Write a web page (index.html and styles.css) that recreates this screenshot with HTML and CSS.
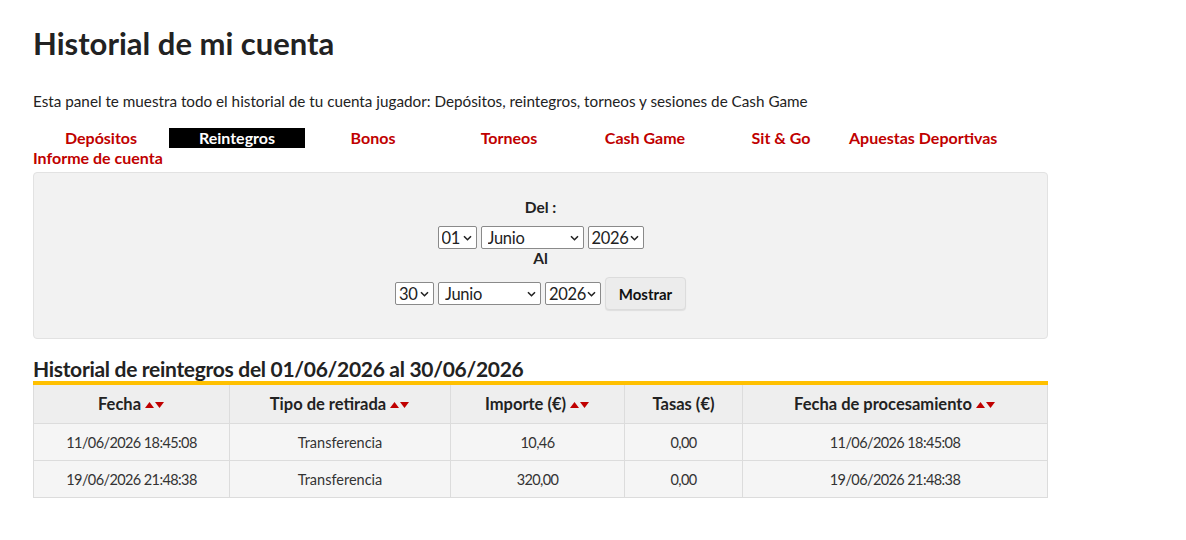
FILE: index.html
```html
<!DOCTYPE html>
<html lang="es">

<head>
    <meta charset="UTF-8">
    <meta name="viewport" content="width=device-width, initial-scale=1.0">
    <title>Historial de mi cuenta</title>
    <link rel="stylesheet" href="styles.css">
</head>

<body>
    <div class="page">
        <h1 class="page-title">Historial de mi cuenta</h1>
        <p class="intro">Esta panel te muestra todo el historial de tu cuenta jugador: Depósitos, reintegros, torneos y sesiones de Cash Game</p>

        <nav class="tabs">
            <a class="tab" href="#">Depósitos</a><a class="tab active" href="#">Reintegros</a><a class="tab" href="#">Bonos</a><a class="tab" href="#">Torneos</a><a class="tab" href="#">Cash Game</a><a class="tab" href="#">Sit &amp; Go</a><a class="tab" href="#">Apuestas Deportivas</a><a class="tab wrap" href="#">Informe de cuenta</a>
        </nav>

        <form class="filter-box">
            <div class="filter-label">Del :</div>
            <div class="filter-row">
                <select class="sel sel-day">
                    <option>01</option>
                </select>
                <select class="sel sel-month">
                    <option>Junio</option>
                </select>
                <select class="sel sel-year">
                    <option>2026</option>
                </select>
            </div>
            <div class="filter-label small">Al</div>
            <div class="filter-row">
                <select class="sel sel-day">
                    <option>30</option>
                </select>
                <select class="sel sel-month">
                    <option>Junio</option>
                </select>
                <select class="sel sel-year">
                    <option>2026</option>
                </select>
                <button type="button" class="btn-show">Mostrar</button>
            </div>
        </form>

        <h2 class="section-title">Historial de reintegros del 01/06/2026 al 30/06/2026</h2>

        <table class="history">
            <colgroup>
                <col style="width: 196px">
                <col style="width: 221px">
                <col style="width: 174px">
                <col style="width: 118px">
                <col>
            </colgroup>
            <thead>
                <tr>
                    <th>Fecha <svg class="sort" width="20" height="8" viewBox="0 0 20 8"><polygon points="0,7 4.5,1 9,7" /><polygon points="10,1 19,1 14.5,7" /></svg></th>
                    <th>Tipo de retirada <svg class="sort" width="20" height="8" viewBox="0 0 20 8"><polygon points="0,7 4.5,1 9,7" /><polygon points="10,1 19,1 14.5,7" /></svg></th>
                    <th>Importe (€) <svg class="sort" width="20" height="8" viewBox="0 0 20 8"><polygon points="0,7 4.5,1 9,7" /><polygon points="10,1 19,1 14.5,7" /></svg></th>
                    <th>Tasas (€)</th>
                    <th>Fecha de procesamiento <svg class="sort" width="20" height="8" viewBox="0 0 20 8"><polygon points="0,7 4.5,1 9,7" /><polygon points="10,1 19,1 14.5,7" /></svg></th>
                </tr>
            </thead>
            <tbody>
                <tr>
                    <td class="num">11/06/2026 18:45:08</td>
                    <td>Transferencia</td>
                    <td class="num">10,46</td>
                    <td class="num">0,00</td>
                    <td class="num">11/06/2026 18:45:08</td>
                </tr>
                <tr>
                    <td class="num">19/06/2026 21:48:38</td>
                    <td>Transferencia</td>
                    <td class="num">320,00</td>
                    <td class="num">0,00</td>
                    <td class="num">19/06/2026 21:48:38</td>
                </tr>
            </tbody>
        </table>
    </div>
</body>

</html>
```

FILE: styles.css
```css
body {
    margin: 0;
    font-family: Lato, "Liberation Sans", sans-serif;
    color: #222;
    background: #fff;
}

.page {
    width: 1015px;
    padding-left: 33px;
}

.page-title {
    margin: 25px 0 0;
    font-size: 31px;
    line-height: 36px;
    font-weight: 700;
    color: #222;
}

.intro {
    margin: 30px 0 0;
    font-size: 15.25px;
    line-height: 20px;
    color: #222;
}

/* tabs */
.tabs {
    margin-top: 17px;
    line-height: 19px;
}

.tab {
    display: inline-block;
    min-width: 136px;
    height: 20px;
    text-align: center;
    font-size: 16px;
    font-weight: 700;
    color: #c00000;
    text-decoration: none;
}

.tab.active {
    background: #000;
    color: #fff;
}

.tab.wrap {
    min-width: 0;
}

/* date filter */
.filter-box {
    margin-top: 4px;
    height: 167px;
    box-sizing: border-box;
    padding-top: 24px;
    background: #f2f2f2;
    border: 1px solid #e2e2e2;
    border-radius: 4px;
    text-align: center;
}

.filter-label {
    font-size: 15.5px;
    font-weight: 700;
    line-height: 20px;
}

.filter-label.small {
    line-height: 18px;
}

.filter-row {
    margin-top: 9px;
    display: flex;
    justify-content: center;
    align-items: center;
    gap: 4px;
}

.filter-label.small + .filter-row {
    margin-top: 10px;
}

.sel {
    appearance: none;
    -webkit-appearance: none;
    height: 23px;
    padding: 0 0 0 3px;
    font-family: inherit;
    font-size: 16.5px;
    letter-spacing: -0.3px;
    color: #222;
    background: #fff url("data:image/svg+xml,%3Csvg xmlns='http://www.w3.org/2000/svg' width='9' height='6' viewBox='0 0 9 6'%3E%3Cpath d='M1 1.2l3.5 3.5 3.5-3.5' fill='none' stroke='%23222' stroke-width='1.6'/%3E%3C/svg%3E") no-repeat right 4px center;
    border: 1px solid #8a8a8a;
    border-radius: 2px;
}

.sel-day {
    width: 39px;
}

.sel-month {
    width: 103px;
    padding-left: 6px;
}

.sel-year {
    width: 56px;
}

.btn-show {
    width: 81px;
    height: 33px;
    font-family: inherit;
    font-size: 15px;
    font-weight: 700;
    color: #111;
    background: #ececec;
    border: 1px solid #dcdcdc;
    border-radius: 4px;
    box-shadow: 0 1px 1px rgba(0, 0, 0, 0.08);
}

/* history table */
.section-title {
    margin: 18px 0 0;
    font-size: 21px;
    letter-spacing: -0.3px;
    line-height: 24px;
    font-weight: 700;
    color: #222;
    border-bottom: 4px solid #ffc000;
}

.history {
    width: 1015px;
    border-collapse: collapse;
    table-layout: fixed;
}

.history th,
.history td {
    border: 1px solid #dcdcdc;
    text-align: center;
}

.history th {
    height: 38px;
    padding: 0;
    background: #eeeeee;
    font-size: 16.5px;
    font-weight: 700;
    color: #222;
    border-top: none;
}

.history td {
    height: 36px;
    padding: 0;
    background: #f5f5f5;
    font-size: 14.5px;
    color: #333;
}

/* Lato figures run wide, pull them in a bit */
.history td.num {
    letter-spacing: -0.6px;
}

.sort {
    fill: #c00000;
    vertical-align: 1px;
}
```
